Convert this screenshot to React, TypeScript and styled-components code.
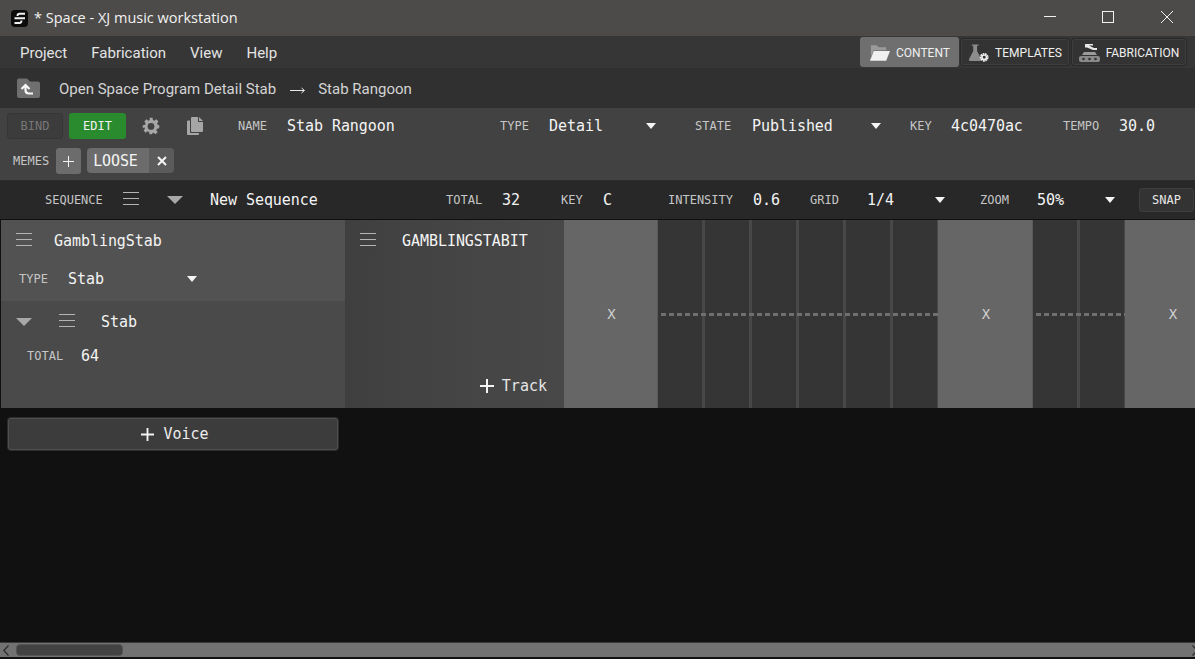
import React from "react";
import styled, { createGlobalStyle } from "styled-components";

const mono = `"DejaVu Sans Mono", "Liberation Mono", monospace`;
const sans = `Roboto, "Liberation Sans", sans-serif`;

const GlobalStyle = createGlobalStyle`
  html, body {
    margin: 0;
    padding: 0;
    height: 100%;
    overflow: hidden;
    background: #111111;
  }
  * { box-sizing: border-box; }
`;

const Page = styled.div`
  width: 1195px;
  height: 659px;
  display: flex;
  flex-direction: column;
  background: #111111;
  color: #f0f0f0;
  font-family: ${sans};
  overflow: hidden;
`;

const TitleBar = styled.div`
  height: 36px;
  flex: none;
  display: flex;
  align-items: center;
  background: #4c4b49;
  padding-left: 11px;
`;

const AppLogo = styled.svg`
  width: 17px;
  height: 17px;
  margin-right: 6px;
`;

const AppTitle = styled.span`
  flex: 1;
  padding-bottom: 2px;
  font-family: "Open Sans", "Noto Sans", sans-serif;
  font-size: 14.5px;
  color: #f2f2f2;
`;

const WindowButton = styled.div<{ $w: number }>`
  width: ${(p) => p.$w}px;
  height: 36px;
  padding-bottom: 2px;
  display: flex;
  align-items: center;
  justify-content: center;
`;

const MenuBar = styled.div`
  height: 32px;
  flex: none;
  display: flex;
  align-items: center;
  background: #363636;
  padding: 0 8px 0 20px;
`;

const MenuItem = styled.span`
  font-size: 15px;
  color: #e4e4e4;
  margin: 2px 24px 0 0;
`;

const NavGroup = styled.div`
  margin-left: auto;
  display: flex;
  align-items: center;
  gap: 1px;
`;

const NavButton = styled.div<{ $active?: boolean; $w: number }>`
  width: ${(p) => p.$w}px;
  height: ${(p) => (p.$active ? 30 : 28)}px;
  padding-top: 1px;
  display: flex;
  align-items: center;
  justify-content: center;
  gap: 6px;
  font-size: 12px;
  color: #f0f0f0;
  border-radius: 3px;
  background: ${(p) => (p.$active ? "#6f6f6f" : "#333333")};
  border: ${(p) => (p.$active ? "none" : "1px solid #292929")};
  box-shadow: ${(p) => (p.$active ? "none" : "0 0 0 1px #3e3e3e inset")};
`;

const Breadcrumb = styled.div`
  height: 40px;
  flex: none;
  display: flex;
  align-items: center;
  background: #303030;
  padding: 2px 0 0 17px;
  font-size: 15px;
  color: #d4d4d4;
`;

const CrumbArrow = styled.svg`
  width: 15px;
  height: 7px;
  margin: 2px 13px 0 14px;
`;

const BackIcon = styled.svg`
  width: 23px;
  height: 20px;
  margin: 0 19px 2px 0;
`;

const Toolbar = styled.div`
  height: 72px;
  flex: none;
  background: #424242;
  display: flex;
  flex-direction: column;
`;

const ToolRow = styled.div`
  height: 36px;
  display: flex;
  align-items: center;
  padding-left: 7px;
`;

const BindButton = styled.div`
  width: 56px;
  height: 26px;
  display: flex;
  align-items: center;
  justify-content: center;
  background: #3c3c3c;
  border: 1px solid #363636;
  border-radius: 3px;
  font-family: ${mono};
  font-size: 12px;
  color: #777777;
`;

const EditButton = styled.div`
  width: 57px;
  height: 26px;
  margin-left: 6px;
  display: flex;
  align-items: center;
  justify-content: center;
  background: #2a8a2e;
  border-radius: 3px;
  font-family: ${mono};
  font-size: 12px;
  color: #f2f2f2;
`;

const IconSlot = styled.div<{ $w: number }>`
  width: ${(p) => p.$w}px;
  flex: none;
  display: flex;
  align-items: center;
  justify-content: center;
`;

const Cell = styled.div<{ $w?: number }>`
  width: ${(p) => (p.$w ? `${p.$w}px` : "auto")};
  flex: none;
  display: flex;
  align-items: center;
`;

const Label = styled.span<{ $w?: number }>`
  width: ${(p) => (p.$w ? `${p.$w}px` : "auto")};
  flex: none;
  font-family: ${mono};
  font-size: 12px;
  color: #c6c6c6;
  white-space: nowrap;
`;

const Value = styled.span<{ $w?: number }>`
  width: ${(p) => (p.$w ? `${p.$w}px` : "auto")};
  flex: none;
  font-family: ${mono};
  font-size: 15px;
  letter-spacing: -0.05px;
  color: #f4f4f4;
  white-space: pre;
`;

const SmallCaret = styled.i`
  display: block;
  width: 0;
  height: 0;
  flex: none;
  border-left: 5px solid transparent;
  border-right: 5px solid transparent;
  border-top: 6px solid #f5f5f5;
`;

const BigCaret = styled.i`
  display: block;
  width: 0;
  height: 0;
  flex: none;
  border-left: 8px solid transparent;
  border-right: 8px solid transparent;
  border-top: 8px solid #a8a8a8;
`;

const Burger = styled.i`
  display: block;
  flex: none;
  width: 16px;
  height: 13px;
  margin-bottom: 3px;
  border-top: 1px solid #b4b4b4;
  border-bottom: 1px solid #b4b4b4;
  background: linear-gradient(#b4b4b4, #b4b4b4) center / 100% 1px no-repeat;
`;

const MemeRow = styled.div`
  height: 26px;
  margin-top: 4px;
  display: flex;
  align-items: center;
  padding-left: 13px;
`;

const MemeAdd = styled.div`
  width: 25px;
  height: 26px;
  margin-left: 7px;
  display: flex;
  align-items: center;
  justify-content: center;
  background: #6c6c6c;
  border-radius: 3px;
`;

const MemeChip = styled.div`
  margin: 0 0 1px 6px;
  height: 25px;
  display: flex;
`;

const MemeName = styled.span`
  width: 62px;
  display: flex;
  align-items: center;
  padding: 1px 0 0 6px;
  background: #6c6c6c;
  border-radius: 4px 0 0 4px;
  font-family: ${mono};
  font-size: 15px;
  letter-spacing: -0.1px;
  color: #f4f4f4;
`;

const MemeRemove = styled.span`
  width: 25px;
  display: flex;
  align-items: center;
  justify-content: center;
  background: #5b5b5b;
  border-radius: 0 4px 4px 0;
`;

const SequenceBar = styled.div`
  height: 40px;
  flex: none;
  display: flex;
  align-items: center;
  background: #282828;
  border-top: 1px solid #2c2c2c;
  border-bottom: 1px solid #0f0f0f;
  padding-left: 45px;
`;

const SnapButton = styled.div`
  width: 55px;
  height: 24px;
  display: flex;
  align-items: center;
  justify-content: center;
  background: #333333;
  border: 1px solid #3e3e3e;
  border-radius: 3px;
  font-family: ${mono};
  font-size: 12px;
  color: #e8e8e8;
`;

const VoiceRow = styled.div`
  height: 188px;
  flex: none;
  display: flex;
  background: #111111;
`;

const VoicePanel = styled.div`
  width: 344px;
  flex: none;
  margin-left: 1px;
  display: flex;
  flex-direction: column;
`;

const VoiceHead = styled.div`
  height: 81px;
  flex: none;
  background: #525252;
  display: flex;
  flex-direction: column;
  padding-left: 15px;
`;

const PanelLine = styled.div<{ $h: number; $gap?: number }>`
  height: ${(p) => p.$h}px;
  display: flex;
  align-items: center;
  gap: ${(p) => p.$gap ?? 0}px;
`;

const PatternBody = styled.div`
  flex: 1;
  background: #4a4a4a;
  display: flex;
  flex-direction: column;
  padding-left: 15px;
`;

const TrackColumn = styled.div`
  width: 219px;
  flex: none;
  background: linear-gradient(90deg, #3f3f3f 0%, #434343 30%, #484848 100%);
  display: flex;
  flex-direction: column;
  padding: 12px 17px 13px 15px;
`;

const TrackHead = styled.div`
  display: flex;
  align-items: center;
  gap: 26px;
  height: 17px;
`;

const AddTrack = styled.div`
  margin-top: auto;
  align-self: flex-end;
  display: flex;
  align-items: center;
  gap: 8px;
  font-family: ${mono};
  font-size: 15px;
  color: #e6e6e6;
`;

const Timeline = styled.div`
  flex: 1;
  display: flex;
  min-width: 0;
  overflow: hidden;
`;

const Step = styled.div<{ $w: number }>`
  width: ${(p) => p.$w}px;
  flex: none;
  padding-left: 2px;
  background: #666666;
  border-right: 1px solid #5a5a5a;
  display: flex;
  align-items: center;
  justify-content: center;
  font-family: ${mono};
  font-size: 14px;
  color: #d0d0d0;
`;

const Rest = styled.div<{ $w: number }>`
  width: ${(p) => p.$w}px;
  flex: none;
  background-color: #353535;
  background-image:
    repeating-linear-gradient(90deg, transparent 0 3px, #707070 3px 8px),
    repeating-linear-gradient(90deg, transparent 0 44.4px, #484848 44.4px 47px);
  background-size: 100% 3px, 100% 100%;
  background-position: 0 92.5px, 0 0;
  background-repeat: no-repeat;
`;

const Workspace = styled.div`
  flex: 1;
  min-height: 0;
  padding: 10px 0 0 8px;
`;

const AddVoice = styled.div`
  width: 330px;
  height: 32px;
  display: flex;
  align-items: center;
  justify-content: center;
  gap: 9px;
  padding-left: 4px;
  background: #3c3c3c;
  border: 1px solid #4f4f4f;
  border-radius: 3px;
  box-shadow: 0 0 0 1px #2c2c2c;
  font-family: ${mono};
  font-size: 15px;
  color: #ededed;
`;

const ScrollBar = styled.div`
  height: 15px;
  flex: none;
  margin-bottom: 2px;
  background: #727272;
  border-top: 1px solid #3a3a3a;
  display: flex;
  align-items: center;
  padding-left: 3px;
`;

const ScrollThumb = styled.div`
  width: 107px;
  height: 12px;
  margin-left: 7px;
  background: #424242;
  border: 1px solid #555555;
  border-radius: 4px;
`;

const ScrollEnd = styled.svg<{ $end?: boolean }>`
  width: 6px;
  height: 11px;
  flex: none;
  margin-left: ${(p) => (p.$end ? "auto" : "0")};
  margin-right: ${(p) => (p.$end ? "-3px" : "0")};
`;

const Plus = ({ size = 14, stroke = 2 }: { size?: number; stroke?: number }) => (
  <svg width={size} height={size} viewBox="0 0 14 14">
    <path d="M7 0v14M0 7h14" stroke="#f4f4f4" strokeWidth={stroke} />
  </svg>
);

const Gear = () => (
  <svg width="18" height="18" viewBox="0 0 24 24" fill="#a6a6a6">
    <path
      fillRule="evenodd"
      d="M10 1h4l.6 3.100 1.900.8 2.600-1.800 2.800 2.800-1.800 2.600.8 1.900L23 11v4l-3.100.6-.8 1.900 1.800 2.600-2.800 2.800-2.600-1.800-1.900.8L13 23h-3l-.6-3.100-1.900-.8-2.600 1.800-2.800-2.800 1.800-2.600-.8-1.900L1 15v-4l3.100-.6.8-1.900-1.800-2.600 2.800-2.800 2.600 1.800 1.900-.8zM12 8a4.500 4.500 0 1 0 0 9 4.500 4.500 0 0 0 0-9z"
    />
  </svg>
);

const CopyIcon = () => (
  <svg width="16" height="18" viewBox="0 0 16 18" fill="#a6a6a6">
    <path d="M5 0h6v5h5v9a1 1 0 0 1-1 1H5a1 1 0 0 1-1-1V1a1 1 0 0 1 1-1z" />
    <path d="M12 0l4 4h-4z" />
    <path d="M0 4.500a1 1 0 0 1 1-1h2v11.500a1 1 0 0 0 1 1h8v1a1 1 0 0 1-1 1H1a1 1 0 0 1-1-1z" />
  </svg>
);

const FolderOpen = () => (
  <svg width="21" height="16" viewBox="0 0 22 16">
    <path d="M2 0h6l2 2h8v3H5L2 12z" fill="#9a9a9a" />
    <path d="M5 6h17l-4 10H1z" fill="#f0f0f0" />
  </svg>
);

const Flask = () => (
  <svg width="21" height="18" viewBox="0 0 22 18">
    <path d="M4 0h7v1.500H9.500V7L14 15.500a1.500 1.500 0 0 1-1.300 2H2.300A1.500 1.500 0 0 1 1 15.500L5.500 7V1.500H4z" fill="#8c8c8c" />
    <circle cx="17" cy="13.500" r="3.500" fill="none" stroke="#f0f0f0" strokeWidth="2.200" strokeDasharray="1.800 .6" />
    <circle cx="17" cy="13.500" r="2.300" fill="none" stroke="#f0f0f0" strokeWidth="1.500" />
  </svg>
);

const Conveyor = () => (
  <svg width="21" height="18" viewBox="0 0 21 18">
    <path d="M6 0h8v1.500H10l5 2.500h3v2h-4L8 3.500H6z" fill="#e8e8e8" />
    <path d="M5 8h11l2 3H3z" fill="#9a9a9a" />
    <rect x="0" y="12" width="21" height="6" rx="2" fill="#8a8a8a" />
    <circle cx="4.500" cy="15" r="1.300" fill="#333" />
    <circle cx="10.500" cy="15" r="1.300" fill="#333" />
    <circle cx="16.500" cy="15" r="1.300" fill="#333" />
  </svg>
);

export default function App() {
  return (
    <Page>
      <GlobalStyle />
      <TitleBar>
        <AppLogo viewBox="0 0 17 17">
          <rect width="17" height="17" rx="4" fill="#0c0c0c" />
          <path
            d="M14 3.800H8.500Q6.500 3.800 6.500 6M3.500 8.200H14M3.500 13H8.500Q10.500 13 10.500 10.500"
            fill="none"
            stroke="#f2f2f2"
            strokeWidth="1.900"
          />
        </AppLogo>
        <AppTitle>* Space - XJ music workstation</AppTitle>
        <WindowButton $w={54}>
          <svg width="12" height="12" viewBox="0 0 12 12">
            <path d="M0 5.500h12" stroke="#f0f0f0" />
          </svg>
        </WindowButton>
        <WindowButton $w={62}>
          <svg width="12" height="12" viewBox="0 0 12 12">
            <rect x=".5" y=".5" width="11" height="11" fill="none" stroke="#f0f0f0" />
          </svg>
        </WindowButton>
        <WindowButton $w={56}>
          <svg width="12" height="12" viewBox="0 0 12 12">
            <path d="M0 0l12 12M12 0L0 12" stroke="#f0f0f0" />
          </svg>
        </WindowButton>
      </TitleBar>

      <MenuBar>
        <MenuItem>Project</MenuItem>
        <MenuItem>Fabrication</MenuItem>
        <MenuItem>View</MenuItem>
        <MenuItem>Help</MenuItem>
        <NavGroup>
          <NavButton $active $w={99}>
            <FolderOpen />
            CONTENT
          </NavButton>
          <NavButton $w={110}>
            <Flask />
            TEMPLATES
          </NavButton>
          <NavButton $w={116}>
            <Conveyor />
            FABRICATION
          </NavButton>
        </NavGroup>
      </MenuBar>

      <Breadcrumb>
        <BackIcon viewBox="0 0 23 20">
          <path d="M0 2.500A2 2 0 0 1 2 .5h8l3 3h8a2 2 0 0 1 2 2V18a2 2 0 0 1-2 2H2a2 2 0 0 1-2-2z" fill="#6f6f6f" />
          <path d="M4.500 11L8.500 7l4 4M8.500 8v4q0 3.500 3.500 3.500h4" fill="none" stroke="#f6f6f6" strokeWidth="2.200" />
        </BackIcon>
        Open Space Program Detail Stab
        <CrumbArrow viewBox="0 0 15 7">
          <path d="M0 3.500h14M11.500 1L14.500 3.500 11.500 6" fill="none" stroke="#e8e8e8" />
        </CrumbArrow>
        Stab Rangoon
      </Breadcrumb>

      <Toolbar>
        <ToolRow>
          <BindButton>BIND</BindButton>
          <EditButton>EDIT</EditButton>
          <IconSlot $w={50}>
            <Gear />
          </IconSlot>
          <IconSlot $w={38}>
            <CopyIcon />
          </IconSlot>
          <Cell $w={24} />
          <Label $w={49}>NAME</Label>
          <Value $w={213}>Stab Rangoon</Value>
          <Label $w={49}>TYPE</Label>
          <Value $w={97}>Detail</Value>
          <Cell $w={49}>
            <SmallCaret />
          </Cell>
          <Label $w={57}>STATE</Label>
          <Value $w={119}>Published</Value>
          <Cell $w={39}>
            <SmallCaret />
          </Cell>
          <Label $w={41}>KEY</Label>
          <Value $w={112}>4c0470ac</Value>
          <Label $w={56}>TEMPO</Label>
          <Value>30.0</Value>
        </ToolRow>
        <MemeRow>
          <Label>MEMES</Label>
          <MemeAdd>
            <Plus size={11} stroke={1.3} />
          </MemeAdd>
          <MemeChip>
            <MemeName>LOOSE</MemeName>
            <MemeRemove>
              <svg width="10" height="10" viewBox="0 0 10 10">
                <path d="M1 1l8 8M9 1L1 9" stroke="#f6f6f6" strokeWidth="2" />
              </svg>
            </MemeRemove>
          </MemeChip>
        </MemeRow>
      </Toolbar>

      <SequenceBar>
        <Label $w={78}>SEQUENCE</Label>
        <Cell $w={44}>
          <Burger />
        </Cell>
        <Cell $w={43}>
          <BigCaret />
        </Cell>
        <Value $w={236}>New Sequence</Value>
        <Label $w={56}>TOTAL</Label>
        <Value $w={59}>32</Value>
        <Label $w={42}>KEY</Label>
        <Value $w={65}>C</Value>
        <Label $w={85}>INTENSITY</Label>
        <Value $w={57}>0.6</Value>
        <Label $w={57}>GRID</Label>
        <Value $w={68}>1/4</Value>
        <Cell $w={45}>
          <SmallCaret />
        </Cell>
        <Label $w={57}>ZOOM</Label>
        <Value $w={68}>50%</Value>
        <Cell $w={34}>
          <SmallCaret />
        </Cell>
        <SnapButton>SNAP</SnapButton>
      </SequenceBar>

      <VoiceRow>
        <VoicePanel>
          <VoiceHead>
            <PanelLine $h={41} $gap={22}>
              <Burger />
              <Value>GamblingStab</Value>
            </PanelLine>
            <PanelLine $h={36}>
              <Cell $w={3} />
              <Label $w={49}>TYPE</Label>
              <Value $w={119}>Stab</Value>
              <SmallCaret />
            </PanelLine>
          </VoiceHead>
          <PatternBody>
            <PanelLine $h={41}>
              <Cell $w={43}>
                <BigCaret />
              </Cell>
              <Burger />
              <Cell $w={26} />
              <Value>Stab</Value>
            </PanelLine>
            <PanelLine $h={28}>
              <Cell $w={11} />
              <Label $w={54}>TOTAL</Label>
              <Value>64</Value>
            </PanelLine>
          </PatternBody>
        </VoicePanel>
        <TrackColumn>
          <TrackHead>
            <Burger />
            <Value>GAMBLINGSTABIT</Value>
          </TrackHead>
          <AddTrack>
            <Plus />
            Track
          </AddTrack>
        </TrackColumn>
        <Timeline>
          <Step $w={94}>X</Step>
          <Rest $w={280} />
          <Step $w={95}>X</Step>
          <Rest $w={92} />
          <Step $w={95}>X</Step>
        </Timeline>
      </VoiceRow>

      <Workspace>
        <AddVoice>
          <Plus size={13} />
          Voice
        </AddVoice>
      </Workspace>

      <ScrollBar>
        <ScrollEnd viewBox="0 0 6 11">
          <path d="M5.500 .5L.8 5.500l4.700 5" fill="none" stroke="#2c2c2c" strokeWidth="1.200" />
        </ScrollEnd>
        <ScrollThumb />
        <ScrollEnd $end viewBox="0 0 6 11">
          <path d="M.5 .5l4.700 5-4.700 5" fill="none" stroke="#2c2c2c" strokeWidth="1.200" />
        </ScrollEnd>
      </ScrollBar>
    </Page>
  );
}
